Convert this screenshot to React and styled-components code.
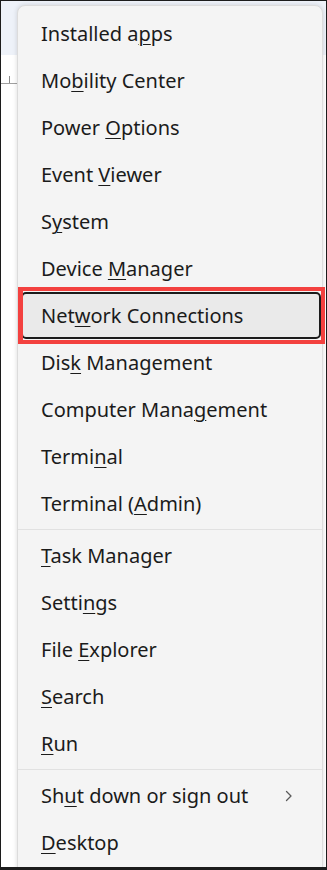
import React from "react";
import styled, { createGlobalStyle } from "styled-components";

const Global = createGlobalStyle`
  html, body { margin: 0; padding: 0; background: #ffffff; }
  * { box-sizing: border-box; }
`;

const Frame = styled.div`
  width: 327px;
  height: 870px;
  border: 1px solid #1c1c1c;
  border-bottom-width: 3px;
  display: grid;
  grid-template: 1fr / 1fr;
  overflow: hidden;
  background: #ffffff;
  font-family: "Noto Sans", "Open Sans", sans-serif;
`;

const Backdrop = styled.div`
  grid-area: 1 / 1;
  display: flex;
  flex-direction: column;
`;

const TopBand = styled.div`
  height: 54px;
  background: #eef2f9;
`;

const Ruler = styled.div`
  margin-top: 21px;
  width: 16px;
  height: 8px;
  border-bottom: 1px solid #a0a0a0;
  display: flex;
  justify-content: center;
`;

const Tick = styled.div`
  width: 1px;
  height: 7px;
  background: #8a8a8a;
`;

const Menu = styled.div`
  grid-area: 1 / 1;
  align-self: start;
  margin: 4px 0 0 16px;
  width: 306px;
  height: 872px;
  background: #f4f4f4;
  border: 1px solid #dcdcdc;
  border-radius: 8px;
  box-shadow: 0 0 5px rgba(0, 0, 0, 0.14);
  padding: 4px 1px 0 3px;
  display: flex;
  flex-direction: column;
`;

const Item = styled.div`
  position: relative;
  height: 47px;
  flex: none;
  display: flex;
  align-items: center;
  justify-content: space-between;
  padding: 0 26px 0 18px;
  border: 2px solid ${(p) => (p.$focused ? "#1b1b1b" : "transparent")};
  border-radius: 5px;
  background: ${(p) => (p.$focused ? "#eaeaea" : "transparent")};
  color: #1b1b1b;
  font-size: 20px;
  white-space: nowrap;

  ${(p) =>
    p.$focused &&
    `
    &::after {
      content: "";
      position: absolute;
      top: -7px;
      bottom: -7px;
      left: -5px;
      right: -6px;
      border: 4.5px solid #f3413f;
      border-left-width: 5px;
      pointer-events: none;
    }
  `}

  u {
    text-decoration-thickness: 1.3px;
    text-underline-offset: 3px;
  }
`;

const Separator = styled.div`
  flex: none;
  height: 1px;
  margin: 2px -1px 2px -3px;
  background: #e1e1e1;
`;

const Chevron = () => (
  <svg width="8" height="12" viewBox="0 0 8 12" fill="none">
    <path d="M1.5 1.5 L6 6 L1.5 10.5" stroke="#5a5a5a" strokeWidth="1.3" strokeLinecap="round" strokeLinejoin="round" />
  </svg>
);

const groups = [
  [
    ["Installed a", "p", "ps"],
    ["Mo", "b", "ility Center"],
    ["Power ", "O", "ptions"],
    ["Event ", "V", "iewer"],
    ["S", "y", "stem"],
    ["Device ", "M", "anager"],
    ["Net", "w", "ork Connections", "focus"],
    ["Dis", "k", " Management"],
    ["Computer Mana", "g", "ement"],
    ["Termi", "n", "al"],
    ["Terminal (", "A", "dmin)"],
  ],
  [
    ["", "T", "ask Manager"],
    ["Setti", "n", "gs"],
    ["File ", "E", "xplorer"],
    ["", "S", "earch"],
    ["", "R", "un"],
  ],
  [
    ["Sh", "u", "t down or sign out", "sub"],
    ["", "D", "esktop"],
  ],
];

export default function App() {
  return (
    <>
      <Global />
      <Frame>
        <Backdrop>
          <TopBand />
          <Ruler>
            <Tick />
          </Ruler>
        </Backdrop>
        <Menu>
          {groups.map((g, gi) => (
            <React.Fragment key={gi}>
              {gi > 0 && <Separator />}
              {g.map(([a, k, b, flag]) => (
                <Item key={a + k + b} $focused={flag === "focus"}>
                  <span>
                    {a}
                    <u>{k}</u>
                    {b}
                  </span>
                  {flag === "sub" && <Chevron />}
                </Item>
              ))}
            </React.Fragment>
          ))}
        </Menu>
      </Frame>
    </>
  );
}
